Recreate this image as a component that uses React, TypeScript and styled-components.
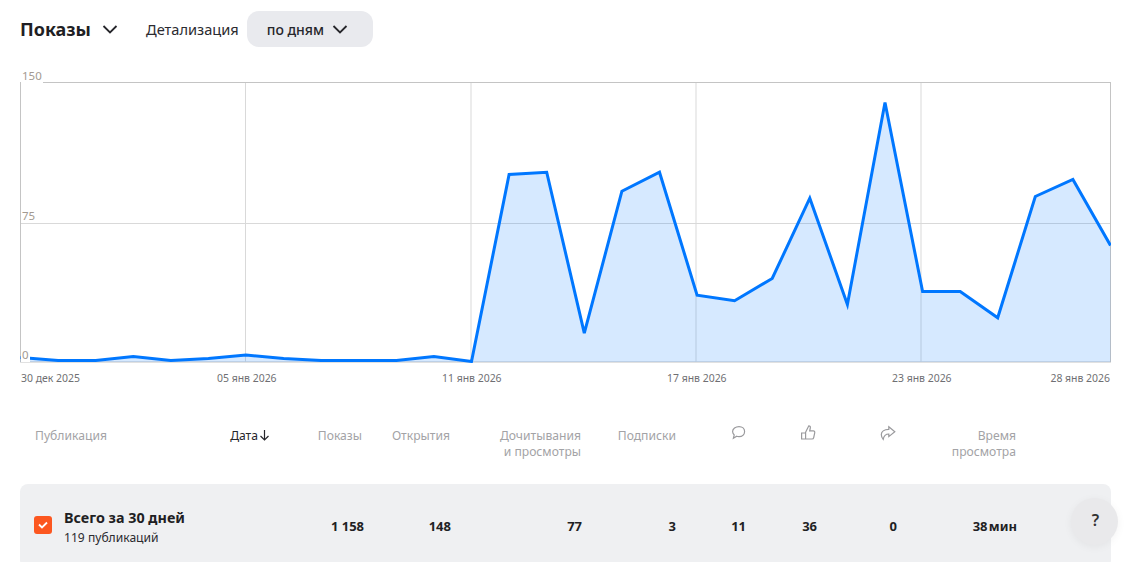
import React from "react";
import styled, { createGlobalStyle } from "styled-components";

const Global = createGlobalStyle`
  html, body { margin: 0; padding: 0; background: #fff; overflow: hidden; }
  body { font-family: "Noto Sans", "Open Sans", sans-serif; color: #1f1f24; }
`;

const Page = styled.div`
  width: 1134px;
  height: 562px;
  overflow: hidden;
  position: relative;
  box-sizing: border-box;
  padding: 11px 24px 0 20px;
`;

const Toolbar = styled.div`
  display: flex;
  align-items: center;
  height: 36px;
`;

const Title = styled.div`
  font-size: 18px;
  font-weight: 700;
  color: #1f1f24;
  margin-right: 11px;
`;

const PlainChevron = styled.svg`
  width: 16px;
  height: 10px;
  margin-right: 28px;
  flex: none;
`;

const ToolbarLabel = styled.div`
  font-size: 14.6px;
  color: #2b2b30;
  margin-right: 8px;
`;

const Select = styled.div`
  width: 126px;
  height: 36px;
  box-sizing: border-box;
  padding-left: 20px;
  border-radius: 12px;
  background: #e9eaee;
  display: flex;
  align-items: center;
  gap: 8px;
  font-size: 14px;
  font-weight: 500;
  color: #26262b;
`;

const SelectChevron = styled.svg`
  width: 16px;
  height: 10px;
  flex: none;
`;

const ChartWrap = styled.div`
  position: relative;
  margin-top: 35px;
  width: 1091px;
  height: 281px;
`;

const ChartSvg = styled.svg`
  display: block;
  width: 1091px;
  height: 281px;
`;

const YLabel = styled.span<{ $top: number }>`
  position: absolute;
  left: 1px;
  top: ${(p) => p.$top}px;
  font-size: 11.5px;
  line-height: 14px;
  padding: 0 1px;
  color: #a39a91;
  background: #fff;
`;

const XAxis = styled.div`
  display: grid;
  grid-template-columns: 196px 225px 225px 225px 159px 59px;
  margin-top: 8px;
  margin-left: 1px;
  width: 1089px;
  font-size: 10.45px;
  line-height: 14px;
  color: #6f6f73;
  white-space: nowrap;
`;

const XLabelEnd = styled.span`
  justify-self: end;
`;

const HeaderRow = styled.div`
  display: grid;
  grid-template-columns: 15px 175px 60px 92px 88px 131px 95px 71px 69px 80px 120px;
  margin-top: 42px;
  height: 57px;
  font-size: 12.15px;
  line-height: 16px;
  color: #a3a3a6;
`;

const HeadCell = styled.div<{ $right?: boolean; $active?: boolean }>`
  text-align: ${(p) => (p.$right ? "right" : "left")};
  color: ${(p) => (p.$active ? "#26262b" : "#a3a3a6")};
  padding-top: 1px;
`;

const IconCell = styled.div`
  display: flex;
  justify-content: flex-end;
`;

const HeadIcon = styled.svg`
  width: 16px;
  height: 17px;
  display: block;
  margin-top: -3px;
`;

const SortArrow = styled.svg`
  width: 11px;
  height: 12px;
  margin-left: 1px;
  vertical-align: -1px;
`;

const TotalRow = styled.div`
  display: grid;
  grid-template-columns: 30px 226px 74px 87px 131px 94px 70px 71px 80px 120px;
  align-items: center;
  height: 84px;
  width: 1091px;
  box-sizing: border-box;
  padding-left: 14px;
  border-radius: 8px;
  background: #eff0f2;
`;

const Check = styled.div`
  width: 18px;
  height: 18px;
  margin-bottom: 2px;
  border-radius: 3px;
  background: #fc5720;
  display: flex;
  align-items: center;
  justify-content: center;
`;

const CheckMark = styled.svg`
  width: 10px;
  height: 8px;
`;

const Summary = styled.div`
  display: flex;
  flex-direction: column;
  gap: 3px;
  margin-top: 2px;
`;

const SummaryTitle = styled.div`
  font-size: 14.35px;
  line-height: 19px;
  font-weight: 700;
  color: #1f1f24;
`;

const SummarySub = styled.div`
  font-size: 12.1px;
  line-height: 16px;
  color: #2b2b30;
`;

const Num = styled.div`
  text-align: right;
  font-size: 13px;
  font-weight: 700;
  color: #1f1f24;
  white-space: nowrap;
`;

const Help = styled.div`
  position: absolute;
  left: 1071px;
  top: 498px;
  width: 47px;
  height: 47px;
  box-sizing: border-box;
  padding: 0 0 3px 2px;
  border-radius: 50%;
  background: #e9e9eb;
  box-shadow: 0 2px 8px rgba(0, 0, 0, 0.05);
  display: flex;
  align-items: center;
  justify-content: center;
  font-size: 16px;
  font-weight: 600;
  color: #333;
`;

const ys = [357, 360, 360, 356, 360, 358, 354.5, 358, 360, 360, 360, 356, 361, 174, 171.7, 332.7, 190.7, 171.7, 294.7, 300.3, 278, 197.7, 304, 102, 291, 291, 317.3, 196, 179, 245];
const oy = 82;
const pts = ys.map((y, i) => [0.5 + (i * 1090) / 29, y - oy + 0.5] as const);
const line = pts.map(([x, y]) => `${x.toFixed(1)},${y.toFixed(1)}`).join(" ");
const area = `0.5,280 ${line} 1090.5,280`;

const chevron = "M1.5 2 L8 8.5 L14.5 2";

export default function App() {
  return (
    <Page>
      <Global />
      <Toolbar>
        <Title>Показы</Title>
        <PlainChevron viewBox="0 0 16 10" fill="none" stroke="#26262b" strokeWidth="1.8">
          <path d={chevron} />
        </PlainChevron>
        <ToolbarLabel>Детализация</ToolbarLabel>
        <Select>
          по дням
          <SelectChevron viewBox="0 0 16 10" fill="none" stroke="#26262b" strokeWidth="1.8">
            <path d={chevron} />
          </SelectChevron>
        </Select>
      </Toolbar>
      <ChartWrap>
        <ChartSvg viewBox="0 0 1091 281">
          <rect x="0.5" y="0.5" width="1090" height="279.5" fill="#fff" stroke="#c4c4c4" />
          {[225.5, 451, 676, 901].map((x) => (
            <line key={x} x1={x} x2={x} y1="1" y2="280" stroke="#d9d9d9" />
          ))}
          <line x1="1" x2="1090" y1="141.5" y2="141.5" stroke="#d9d9d9" />
          <polygon points={area} fill="#0077ff" fillOpacity="0.16" />
          <polyline points={line} fill="none" stroke="#0077ff" strokeWidth="3" strokeLinejoin="miter" />
        </ChartSvg>
        <YLabel $top={-13}>150</YLabel>
        <YLabel $top={127}>75</YLabel>
        <YLabel $top={266}>0</YLabel>
      </ChartWrap>
      <XAxis>
        <span>30 дек 2025</span>
        <span>05 янв 2026</span>
        <span>11 янв 2026</span>
        <span>17 янв 2026</span>
        <span>23 янв 2026</span>
        <XLabelEnd>28 янв 2026</XLabelEnd>
      </XAxis>
      <HeaderRow>
        <div />
        <HeadCell>Публикация</HeadCell>
        <HeadCell $right $active>
          Дата
          <SortArrow viewBox="0 0 11 12" fill="none" stroke="#26262b" strokeWidth="1.2">
            <path d="M5.5 1 V11 M1.5 7 L5.5 11 L9.5 7" />
          </SortArrow>
        </HeadCell>
        <HeadCell $right>Показы</HeadCell>
        <HeadCell $right>Открытия</HeadCell>
        <HeadCell $right>
          Дочитывания
          <br />и просмотры
        </HeadCell>
        <HeadCell $right>Подписки</HeadCell>
        <IconCell>
          <HeadIcon viewBox="0 0 16 17" fill="none" stroke="#9a9a9d" strokeWidth="1.2">
            <path d="M8 2.6 C11.3 2.6 13.6 4.7 13.6 7.6 C13.6 10.5 11.2 12.6 8 12.6 C7.2 12.6 6.4 12.5 5.7 12.2 L2.4 14.3 L3.2 11 C2.2 10 1.6 8.9 1.6 7.6 C1.6 4.7 4.6 2.6 8 2.6 Z" />
          </HeadIcon>
        </IconCell>
        <IconCell>
          <HeadIcon viewBox="0 0 16 17" fill="none" stroke="#9a9a9d" strokeWidth="1.2">
            <path d="M5.6 8.2 L8.8 1.8 C10 1.8 10.6 2.8 10.3 4 L9.7 6.8 H13.2 C14.4 6.8 15 7.7 14.7 8.8 L13.7 13.6 C13.5 14.6 12.9 15 12 15 H5.6 Z M1.6 9 H5.6 V15 H1.6 Z" />
          </HeadIcon>
        </IconCell>
        <IconCell>
          <HeadIcon viewBox="0 0 16 17" fill="none" stroke="#9a9a9d" strokeWidth="1.2">
            <path d="M8.8 2.8 L14.8 7.8 L8.8 12.6 V10 C6 10 4 10.8 3.2 15.4 C1.6 13.6 1.3 12 1.3 10.6 C1.3 7.6 4 5.4 8.8 5.4 Z" />
          </HeadIcon>
        </IconCell>
        <HeadCell $right>
          Время
          <br />
          просмотра
        </HeadCell>
      </HeaderRow>
      <TotalRow>
        <Check>
          <CheckMark viewBox="0 0 10 8" fill="none" stroke="#fff" strokeWidth="1.8">
            <path d="M1 3.5 L4 6.5 L9 1.5" />
          </CheckMark>
        </Check>
        <Summary>
          <SummaryTitle>Всего за 30 дней</SummaryTitle>
          <SummarySub>119 публикаций</SummarySub>
        </Summary>
        <Num>1 158</Num>
        <Num>148</Num>
        <Num>77</Num>
        <Num>3</Num>
        <Num>11</Num>
        <Num>36</Num>
        <Num>0</Num>
        <Num>38{"\u200A"}мин</Num>
      </TotalRow>
      <Help>?</Help>
    </Page>
  );
}
